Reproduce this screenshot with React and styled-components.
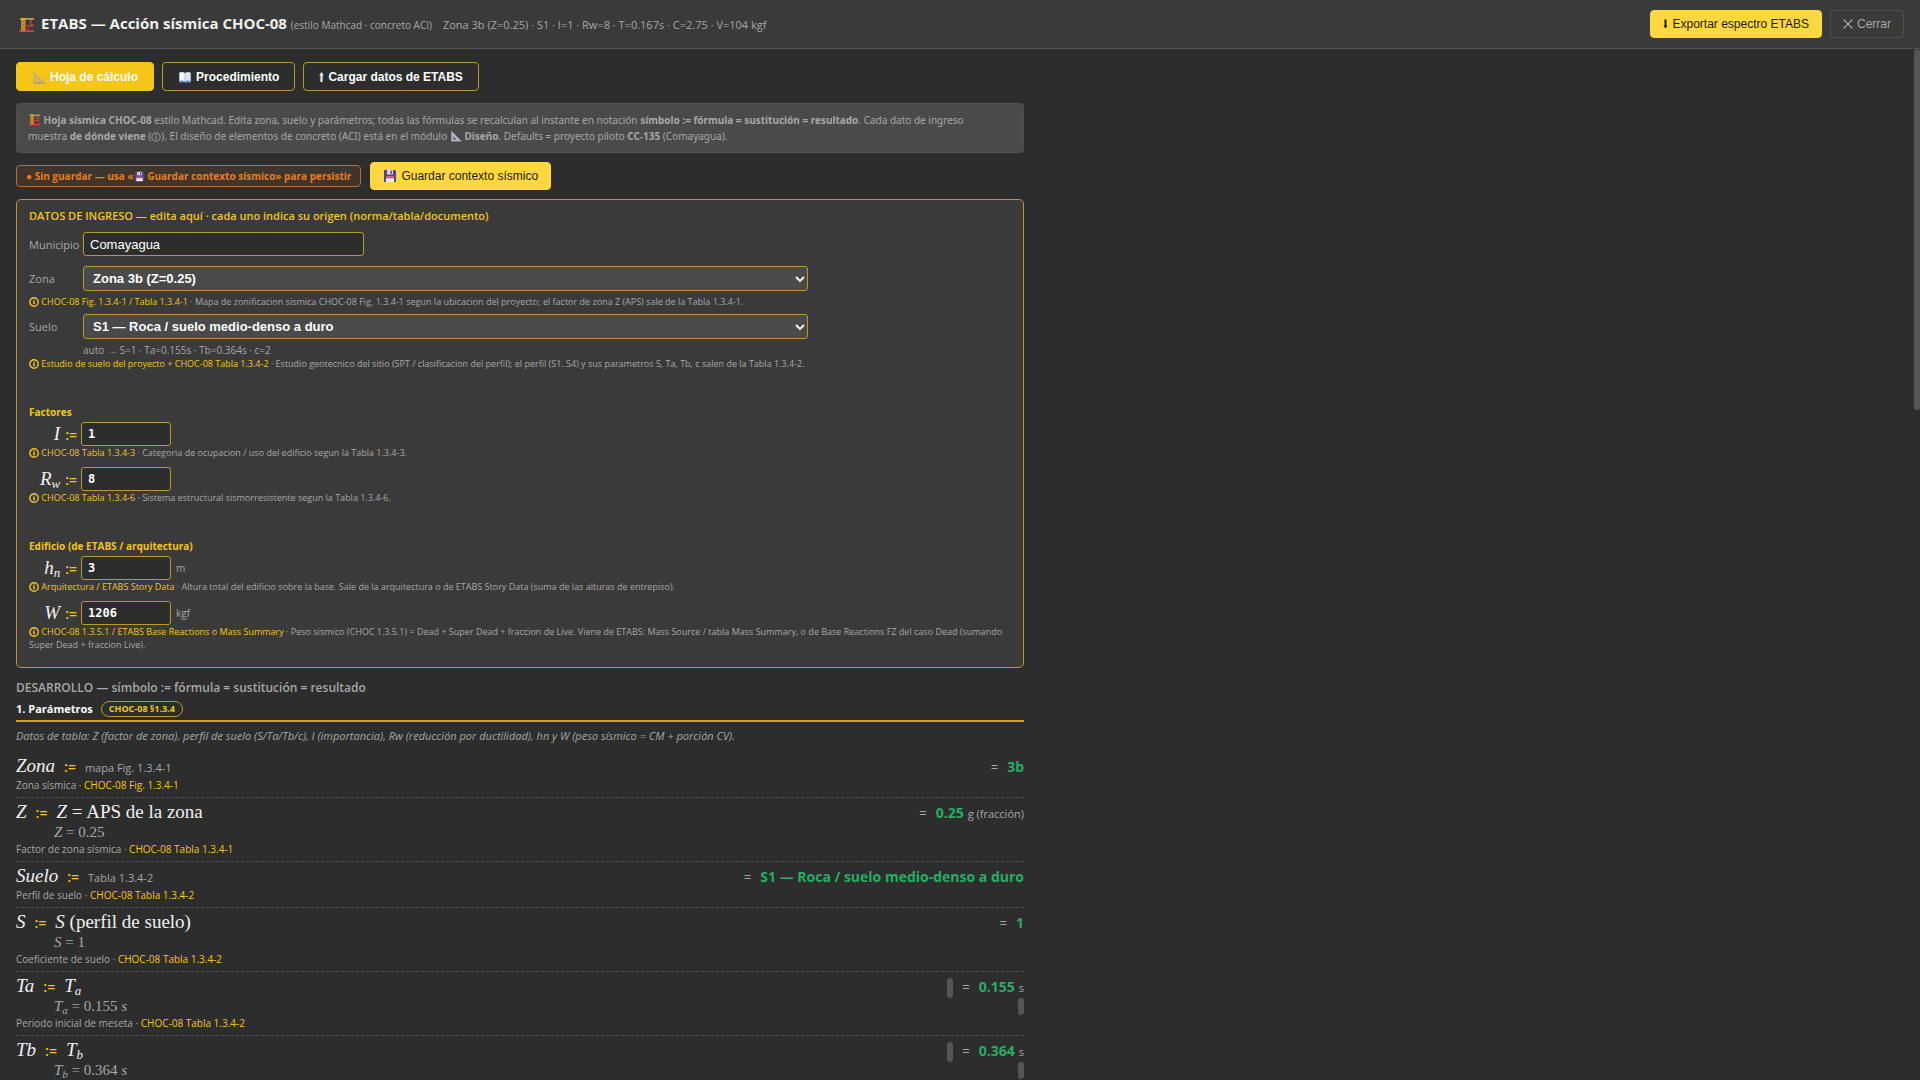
import React from "react";
import styled, { createGlobalStyle } from "styled-components";

const GlobalStyle = createGlobalStyle`
  * {
    box-sizing: border-box;
  }

  body {
    margin: 0;
    background-color: #2d2d2d;
    color: #f0f0f0;
    font-family: "Open Sans", "Noto Sans", sans-serif;
    font-size: 12px;
  }
`;

const Page = styled.div`
  height: 100vh;
  display: flex;
  flex-direction: column;
  overflow: hidden;
`;

const Header = styled.header`
  display: flex;
  align-items: center;
  gap: 8px;
  padding: 10px 16px;
  background-color: #3a3a3a;
  border-bottom: 1px solid #505050;
`;

const Brand = styled.div`
  display: flex;
  align-items: center;
  gap: 6px;
  height: 28px;
  padding: 0 3px 0 2px;
`;

const Title = styled.h1`
  margin: 0;
  font-size: 15px;
  line-height: 24px;
  font-weight: 700;
  white-space: nowrap;
`;

const TitleNote = styled.small`
  font-size: 10px;
  font-weight: 400;
  color: #a8a8a8;
`;

const Summary = styled.span`
  flex: 1;
  font-size: 11px;
  color: #a8a8a8;
`;

const Button = styled.button`
  display: inline-flex;
  align-items: center;
  gap: 4px;
  height: 28px;
  padding: 0 12px;
  border: 1px solid ${(props) => (props.$ghost ? "#505050" : "#ffd740")};
  border-radius: 4px;
  background-color: ${(props) => (props.$ghost ? "transparent" : "#ffd740")};
  color: ${(props) => (props.$ghost ? "#a8a8a8" : "#1c1c1c")};
  font-family: "Liberation Sans", Arial, sans-serif;
  font-size: 12px;
  white-space: nowrap;
`;

const Body = styled.div`
  flex: 1;
  min-height: 0;
  position: relative;
  overflow: hidden;
  padding: 13px 16px;
`;

const PageThumb = styled.div`
  position: absolute;
  top: 0;
  right: 0;
  width: 6px;
  height: 35%;
  border-radius: 3px;
  background-color: #555555;
`;

const Column = styled.main`
  max-width: 1008px;
`;

const Tabs = styled.nav`
  display: flex;
  gap: 8px;
  margin-bottom: 12px;
`;

const Tab = styled.button`
  display: inline-flex;
  align-items: center;
  gap: 4px;
  height: 29px;
  padding: 0 15px;
  border: 1px solid ${(props) => (props.$active ? "#f5c518" : "#b89a28")};
  border-radius: 4px;
  background-color: ${(props) => (props.$active ? "#f5c518" : "#2d2d2d")};
  color: #ffffff;
  font-family: "Liberation Sans", Arial, sans-serif;
  font-size: 12px;
  font-weight: 700;
  white-space: nowrap;
`;

const Info = styled.p`
  margin: 0 0 9px;
  padding: 8px 40px 8px 11px;
  border: 1px solid #505050;
  border-radius: 4px;
  background-color: #4a4a4a;
  color: #a8a8a8;
  font-family: "Noto Sans", "Open Sans", sans-serif;
  font-size: 10px;
  line-height: 16px;
`;

const SaveBar = styled.div`
  display: flex;
  align-items: center;
  gap: 9px;
  margin-bottom: 9px;
`;

const Unsaved = styled.span`
  padding: 0 9px;
  border: 1px solid #c06a24;
  border-radius: 4px;
  background-color: #40352c;
  color: #e67e22;
  font-size: 10px;
  line-height: 20px;
  font-weight: 700;
  white-space: nowrap;
`;

const Panel = styled.section`
  padding: 8px 12px 16px;
  border: 1px solid #b89a28;
  border-radius: 5px;
  background-color: #3a3a3a;
`;

const PanelTitle = styled.h2`
  margin: 0 0 8px;
  font-size: 11px;
  line-height: 16px;
  font-weight: 600;
  color: #f5c518;
`;

const GroupTitle = styled.h3`
  margin: 0 0 3px;
  padding-top: 35px;
  font-size: 10px;
  line-height: 14px;
  font-weight: 700;
  color: #f5c518;
`;

const Field = styled.div`
  display: grid;
  grid-template-columns: 48px minmax(0, 725px);
  align-items: center;
  column-gap: 6px;
  margin-bottom: ${(props) => props.$after || 0}px;
`;

const FieldLabel = styled.label`
  font-size: 11px;
  color: #a8a8a8;
`;

const TextInput = styled.input`
  width: 281px;
  height: 24px;
  padding: 0 6px;
  border: 1px solid #b89a28;
  border-radius: 3px;
  background-color: #2d2d2d;
  color: #ffffff;
  font-family: "Liberation Sans", Arial, sans-serif;
  font-size: 13px;
`;

const SelectWrap = styled.div`
  position: relative;
`;

const Select = styled.select`
  display: block;
  width: 100%;
  height: 25px;
  padding: 0 30px 0 9px;
  appearance: none;
  border: 1px solid #b89a28;
  border-radius: 3px;
  background-color: #4a4a4a;
  color: #ffffff;
  font-family: "Liberation Sans", Arial, sans-serif;
  font-size: 13px;
  font-weight: 700;
`;

const Chevron = styled.svg`
  position: absolute;
  right: 3px;
  top: 8px;
  pointer-events: none;
`;

const Auto = styled.p`
  margin: 4px 0 0 54px;
  font-size: 10px;
  line-height: 14px;
  color: #a8a8a8;
`;

const Note = styled.p`
  margin: 0 0 ${(props) => props.$after || 0}px;
  padding-top: ${(props) => props.$before || 0}px;
  font-size: 9px;
  line-height: 13px;
  color: #a8a8a8;
`;

const Source = styled.span`
  color: #f5c518;
`;

const MathField = styled.div`
  display: flex;
  align-items: center;
  height: 24px;
`;

const MathLabel = styled.label`
  display: flex;
  align-items: baseline;
  justify-content: flex-end;
  gap: 5px;
  width: 48px;
  margin-right: 4px;
`;

const NumberInput = styled.input`
  width: 90px;
  height: 24px;
  padding: 0 6px;
  border: 1px solid #b89a28;
  border-radius: 3px;
  background-color: #2d2d2d;
  color: #ffffff;
  font-family: "DejaVu Sans Mono", "Liberation Mono", monospace;
  font-size: 12px;
  font-weight: 700;
`;

const Unit = styled.span`
  margin-left: 5px;
  font-size: 10px;
  color: #a8a8a8;
`;

const MathText = styled.span`
  font-family: "Liberation Serif", "Times New Roman", serif;
  font-size: ${(props) => (props.$small ? 15 : 19)}px;
  line-height: 20px;
  color: ${(props) => (props.$small ? "#a8a8a8" : "#f0f0f0")};
  white-space: nowrap;

  sub {
    font-size: ${(props) => (props.$small ? 11 : 13)}px;
    line-height: 0;
    font-style: italic;
    vertical-align: -3px;
  }
`;

const Assign = styled.span`
  font-size: 14px;
  line-height: 20px;
  font-weight: 600;
  color: #f5c518;
`;

const DevTitle = styled.h2`
  margin: 11px 0 0;
  font-size: 12px;
  line-height: 18px;
  font-weight: 600;
  color: #a8a8a8;
`;

const SectionHead = styled.h3`
  display: flex;
  align-items: center;
  gap: 8px;
  margin: 0;
  padding: 2px 0 1px;
  border-bottom: 2px solid #c9a41c;
  font-size: 11px;
  line-height: 20px;
  font-weight: 700;
  color: #ffffff;
`;

const Pill = styled.span`
  padding: 0 7px;
  border: 1px solid #b89a28;
  border-radius: 8px;
  font-size: 9px;
  line-height: 14px;
  color: #f5c518;
`;

const Lead = styled.p`
  margin: 6px 0 8px;
  font-size: 11px;
  line-height: 16px;
  font-style: italic;
  color: #a8a8a8;
`;

const Step = styled.article`
  padding: 4px 0;
  border-bottom: 1px dashed #505050;
`;

const StepMain = styled.div`
  display: flex;
  align-items: baseline;
  gap: 9px;
  height: 21px;
`;

const Plain = styled.span`
  font-size: 11px;
  color: #a8a8a8;
`;

const Result = styled.span`
  display: flex;
  align-items: baseline;
  margin-left: auto;
  font-size: 13px;
  line-height: 20px;
  color: #a8a8a8;
  white-space: nowrap;
`;

const Value = styled.output`
  margin-left: 9px;
  font-size: 14px;
  font-weight: 700;
  color: #27ae60;
`;

const ResultUnit = styled.span`
  margin-left: 4px;
  font-size: 11px;
`;

const Substitution = styled.div`
  display: flex;
  align-items: center;
  justify-content: space-between;
  height: 18px;
  padding-left: 38px;
`;

const Thumb = styled.i`
  align-self: center;
  width: 6px;
  height: ${(props) => props.$height}px;
  margin-right: ${(props) => props.$gap || 0}px;
  border-radius: 3px;
  background-color: #555555;
`;

const Caption = styled.p`
  margin: 0;
  font-size: 10px;
  line-height: 16px;
  color: #a8a8a8;
`;

const Icon = styled.svg`
  flex: none;
  vertical-align: -2px;
`;

function CraneIcon({ size }) {
  return (
    <Icon width={size} height={size} viewBox="0 0 16 16" aria-hidden="true">
      <path d="M2 2h13v1.5H2z" fill="#e0a030" />
      <path d="M3 2h4v12H3z" fill="#e8a832" />
      <path
        d="M3.5 4l3 3-3 3 3 3M6.500 4l-3 3 3 3-3 3"
        fill="none"
        stroke="#8a5a20"
        strokeWidth="0.8"
      />
      <path d="M12 3v4" stroke="#b0a090" strokeWidth="0.7" />
      <path d="M8 8.500h3L12.500 7l2 1.500V10H8z" fill="#c93a3a" />
      <path d="M8 10h3v4H8z" fill="#7d3038" />
      <path d="M1 13.500h14V15H1z" fill="#d9473f" />
    </Icon>
  );
}

function RulerIcon({ size, color = "#b9b4c4" }) {
  return (
    <Icon width={size} height={size} viewBox="0 0 14 14" aria-hidden="true">
      <path d="M1.500 1v12h12zM4 7.500L7.500 11H4z" fill={color} fillRule="evenodd" />
      <path d="M1.500 13.200h12" stroke="#8d8a95" strokeWidth="0.8" />
    </Icon>
  );
}

function BookIcon() {
  return (
    <Icon width="14" height="14" viewBox="0 0 14 14" aria-hidden="true">
      <path d="M1 3h12v9.500H1z" fill="#5f8fd0" />
      <path d="M1.500 2.500Q4.500 1.500 7 3v8.500Q4.500 10 1.500 11z" fill="#f4f5fa" />
      <path d="M12.500 2.500Q9.500 1.500 7 3v8.500Q9.500 10 12.500 11z" fill="#dfe3f0" />
      <path d="M7 3v8.500" stroke="#9aa5c0" strokeWidth="0.6" />
    </Icon>
  );
}

function DiskIcon({ size }) {
  return (
    <Icon width={size} height={size} viewBox="0 0 14 14" aria-hidden="true">
      <path d="M1 1h11l1 1v11H1z" fill="#5b3f8c" />
      <path d="M4 1h6v4.500H4z" fill="#d8d4e4" />
      <path d="M7.500 1.800h1.500v3H7.500z" fill="#5b3f8c" />
      <path d="M3 7.500h8V13H3z" fill="#f2eef6" />
      <path d="M3 7.500h8v1.800H3z" fill="#d14b6a" />
    </Icon>
  );
}

function ArrowIcon({ down }) {
  return (
    <Icon width="5" height="12" viewBox="0 0 5 12" aria-hidden="true">
      <path
        d={
          down
            ? "M1.500 1.500h2v6h1L2.500 10.500.500 7.500h1z"
            : "M1.500 11h2V4.500h1.300L2.500 1 .2 4.500h1.300z"
        }
        fill="currentColor"
      />
    </Icon>
  );
}

function CloseIcon() {
  return (
    <Icon width="10" height="10" viewBox="0 0 10 10" aria-hidden="true">
      <path d="M.5.5l9 9M9.500.5l-9 9" stroke="currentColor" strokeWidth="1.100" />
    </Icon>
  );
}

function InfoIcon({ size, bold }) {
  return (
    <Icon width={size} height={size} viewBox="0 0 10 10" aria-hidden="true">
      <circle
        cx="5"
        cy="5"
        r="4.200"
        fill="none"
        stroke="currentColor"
        strokeWidth={bold ? 1.4 : 0.9}
      />
      <path
        d="M5 4.300v3M5 2.400v1.200"
        stroke="currentColor"
        strokeWidth={bold ? 1.6 : 1}
      />
    </Icon>
  );
}

function SelectField({ id, label, value }) {
  return (
    <Field>
      <FieldLabel htmlFor={id}>{label}</FieldLabel>
      <SelectWrap>
        <Select id={id} defaultValue={value}>
          <option>{value}</option>
        </Select>
        <Chevron width="10" height="10" viewBox="0 0 10 10" aria-hidden="true">
          <path d="M1 3l4 4 4-4" fill="none" stroke="#ffffff" strokeWidth="1.800" />
        </Chevron>
      </SelectWrap>
    </Field>
  );
}

function Origin({ source, text, before, after }) {
  return (
    <Note $before={before} $after={after}>
      <Source>
        <InfoIcon size={10} bold /> {source}
      </Source>
      {" · "}
      {text}
    </Note>
  );
}

function NumberField({ id, symbol, sub, value, unit }) {
  return (
    <MathField>
      <MathLabel htmlFor={id}>
        <MathText>
          <em>{symbol}</em>
          {sub && <sub>{sub}</sub>}
        </MathText>
        <Assign>:=</Assign>
      </MathLabel>
      <NumberInput id={id} defaultValue={value} />
      {unit && <Unit>{unit}</Unit>}
    </MathField>
  );
}

const steps = [
  {
    symbol: "Zona",
    plain: "mapa Fig. 1.3.4-1",
    value: "3b",
    caption: "Zona sísmica",
    source: "CHOC-08 Fig. 1.3.4-1",
  },
  {
    symbol: "Z",
    formula: (
      <>
        <em>Z</em> = APS de la zona
      </>
    ),
    substitution: (
      <>
        <em>Z</em> = 0.25
      </>
    ),
    value: "0.25",
    unit: "g (fracción)",
    caption: "Factor de zona sísmica",
    source: "CHOC-08 Tabla 1.3.4-1",
  },
  {
    symbol: "Suelo",
    plain: "Tabla 1.3.4-2",
    value: "S1 — Roca / suelo medio-denso a duro",
    caption: "Perfil de suelo",
    source: "CHOC-08 Tabla 1.3.4-2",
  },
  {
    symbol: "S",
    formula: (
      <>
        <em>S</em> (perfil de suelo)
      </>
    ),
    substitution: (
      <>
        <em>S</em> = 1
      </>
    ),
    value: "1",
    caption: "Coeficiente de suelo",
    source: "CHOC-08 Tabla 1.3.4-2",
  },
  {
    symbol: "Ta",
    formula: (
      <>
        <em>T</em>
        <sub>a</sub>
      </>
    ),
    substitution: (
      <>
        <em>T</em>
        <sub>a</sub> = 0.155 <em>s</em>
      </>
    ),
    value: "0.155",
    unit: "s",
    scroll: true,
    caption: "Periodo inicial de meseta",
    source: "CHOC-08 Tabla 1.3.4-2",
  },
  {
    symbol: "Tb",
    formula: (
      <>
        <em>T</em>
        <sub>b</sub>
      </>
    ),
    substitution: (
      <>
        <em>T</em>
        <sub>b</sub> = 0.364 <em>s</em>
      </>
    ),
    value: "0.364",
    unit: "s",
    scroll: true,
  },
];

export default function App() {
  return (
    <Page>
      <GlobalStyle />
      <Header>
        <Brand>
          <CraneIcon size={17} />
          <Title>
            ETABS — Acción sísmica CHOC-08{" "}
            <TitleNote>(estilo Mathcad · concreto ACI)</TitleNote>
          </Title>
        </Brand>
        <Summary>
          Zona 3b (Z=0.25) · S1 · I=1 · Rw=8 · T=0.167s · C=2.75 · V=104 kgf
        </Summary>
        <Button>
          <ArrowIcon down /> Exportar espectro ETABS
        </Button>
        <Button $ghost>
          <CloseIcon /> Cerrar
        </Button>
      </Header>

      <Body>
        <Column>
          <Tabs>
            <Tab $active>
              <RulerIcon size={14} color="#c9b26a" /> Hoja de cálculo
            </Tab>
            <Tab>
              <BookIcon /> Procedimiento
            </Tab>
            <Tab>
              <ArrowIcon /> Cargar datos de ETABS
            </Tab>
          </Tabs>

          <Info>
            <CraneIcon size={13} /> <b>Hoja sísmica CHOC-08</b> estilo Mathcad.
            Edita zona, suelo y parámetros; todas las fórmulas se recalculan al
            instante en notación <b>símbolo := fórmula = sustitución = resultado</b>.
            Cada dato de ingreso muestra <b>de dónde viene</b> (
            <InfoIcon size={10} />
            ). El diseño de elementos de concreto (ACI) está en el módulo{" "}
            <RulerIcon size={12} /> <b>Diseño</b>. Defaults = proyecto piloto{" "}
            <b>CC-135</b> (Comayagua).
          </Info>

          <SaveBar>
            <Unsaved>
              ● Sin guardar — usa «<DiskIcon size={11} /> Guardar contexto
              sísmico» para persistir
            </Unsaved>
            <Button>
              <DiskIcon size={14} /> Guardar contexto sísmico
            </Button>
          </SaveBar>

          <Panel>
            <PanelTitle>
              DATOS DE INGRESO — edita aquí · cada uno indica su origen
              (norma/tabla/documento)
            </PanelTitle>
            <Field $after={10}>
              <FieldLabel htmlFor="municipio">Municipio</FieldLabel>
              <TextInput id="municipio" defaultValue="Comayagua" />
            </Field>
            <SelectField id="zona" label="Zona" value="Zona 3b (Z=0.25)" />
            <Origin
              before={4}
              after={6}
              source="CHOC-08 Fig. 1.3.4-1 / Tabla 1.3.4-1"
              text="Mapa de zonificacion sismica CHOC-08 Fig. 1.3.4-1 segun la ubicacion del proyecto; el factor de zona Z (APS) sale de la Tabla 1.3.4-1."
            />
            <SelectField
              id="suelo"
              label="Suelo"
              value="S1 — Roca / suelo medio-denso a duro"
            />
            <Auto>auto → S=1 · Ta=0.155s · Tb=0.364s · c=2</Auto>
            <Origin
              source="Estudio de suelo del proyecto + CHOC-08 Tabla 1.3.4-2"
              text="Estudio geotecnico del sitio (SPT / clasificacion del perfil); el perfil (S1..S4) y sus parametros S, Ta, Tb, c salen de la Tabla 1.3.4-2."
            />

            <GroupTitle>Factores</GroupTitle>
            <NumberField id="i" symbol="I" value="1" />
            <Origin
              after={8}
              source="CHOC-08 Tabla 1.3.4-3"
              text="Categoria de ocupacion / uso del edificio segun la Tabla 1.3.4-3."
            />
            <NumberField id="rw" symbol="R" sub="w" value="8" />
            <Origin
              source="CHOC-08 Tabla 1.3.4-6"
              text="Sistema estructural sismorresistente segun la Tabla 1.3.4-6."
            />

            <GroupTitle>Edificio (de ETABS / arquitectura)</GroupTitle>
            <NumberField id="hn" symbol="h" sub="n" value="3" unit="m" />
            <Origin
              after={8}
              source="Arquitectura / ETABS Story Data"
              text="Altura total del edificio sobre la base. Sale de la arquitectura o de ETABS Story Data (suma de las alturas de entrepiso)."
            />
            <NumberField id="w" symbol="W" value="1206" unit="kgf" />
            <Origin
              source="CHOC-08 1.3.5.1 / ETABS Base Reactions o Mass Summary"
              text="Peso sismico (CHOC 1.3.5.1) = Dead + Super Dead + fraccion de Live. Viene de ETABS: Mass Source / tabla Mass Summary, o de Base Reactions FZ del caso Dead (sumando Super Dead + fraccion Live)."
            />
          </Panel>

          <DevTitle>
            DESARROLLO — símbolo := fórmula = sustitución = resultado
          </DevTitle>
          <SectionHead>
            1. Parámetros <Pill>CHOC-08 §1.3.4</Pill>
          </SectionHead>
          <Lead>
            Datos de tabla: Z (factor de zona), perfil de suelo (S/Ta/Tb/c), I
            (importancia), Rw (reducción por ductilidad), hn y W (peso sísmico =
            CM + porción CV).
          </Lead>

          {steps.map((step) => (
            <Step key={step.symbol}>
              <StepMain>
                <MathText>
                  <em>{step.symbol}</em>
                </MathText>
                <Assign>:=</Assign>
                {step.plain && <Plain>{step.plain}</Plain>}
                {step.formula && <MathText>{step.formula}</MathText>}
                <Result>
                  {step.scroll && <Thumb $height={20} $gap={9} />}
                  =<Value>{step.value}</Value>
                  {step.unit && <ResultUnit>{step.unit}</ResultUnit>}
                </Result>
              </StepMain>
              {step.substitution && (
                <Substitution>
                  <MathText $small>{step.substitution}</MathText>
                  {step.scroll && <Thumb $height={17} />}
                </Substitution>
              )}
              {step.caption && (
                <Caption>
                  {step.caption} · <Source>{step.source}</Source>
                </Caption>
              )}
            </Step>
          ))}
        </Column>
        <PageThumb />
      </Body>
    </Page>
  );
}
